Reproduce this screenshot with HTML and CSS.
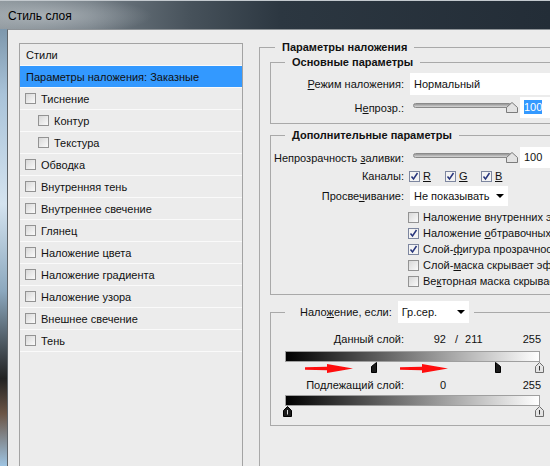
FILE: index.html
```html
<!DOCTYPE html>
<html lang="ru">
<head>
  <meta charset="UTF-8">
  <title>Стиль слоя</title>
  <link rel="stylesheet" href="styles.css">
</head>
<body>
<div class="window">
  <div class="titlebar">Стиль слоя</div>
  <div class="frame">
    <div class="glass"></div>
    <div class="client">

      <!-- список стилей слева -->
      <div class="styles-list">
        <div class="list-head">Стили</div>
        <div class="list-row selected">Параметры наложения: Заказные</div>
        <div class="list-row"><span class="cb"></span>Тиснение</div>
        <div class="list-row sub"><span class="cb"></span>Контур</div>
        <div class="list-row sub"><span class="cb"></span>Текстура</div>
        <div class="list-row"><span class="cb"></span>Обводка</div>
        <div class="list-row"><span class="cb"></span>Внутренняя тень</div>
        <div class="list-row"><span class="cb"></span>Внутреннее свечение</div>
        <div class="list-row"><span class="cb"></span>Глянец</div>
        <div class="list-row"><span class="cb"></span>Наложение цвета</div>
        <div class="list-row"><span class="cb"></span>Наложение градиента</div>
        <div class="list-row"><span class="cb"></span>Наложение узора</div>
        <div class="list-row"><span class="cb"></span>Внешнее свечение</div>
        <div class="list-row"><span class="cb"></span>Тень</div>
      </div>

      <!-- параметры справа -->
      <div class="settings">
        <fieldset class="group outer">
          <legend>Параметры наложения</legend>

          <fieldset class="group basic">
            <legend>Основные параметры</legend>
            <div class="row">
              <span class="lbl"><u>Р</u>ежим наложения:</span>
              <div class="select wide">Нормальный</div>
            </div>
            <div class="row opacity">
              <span class="lbl">Н<u>е</u>прозр.:</span>
              <div class="slider">
                <div class="track"></div>
                <svg class="slider-thumb" width="12" height="11" viewBox="0 0 12 11"><path d="M.5 10.5V5.5L6 .5l5.5 5v5z" fill="#e2e2e2" stroke="#7b7b7b"/></svg>
              </div>
              <div class="num"><span class="hl">100</span></div>
            </div>
          </fieldset>

          <fieldset class="group extra">
            <legend>Дополнительные параметры</legend>
            <div class="row opacity">
              <span class="lbl">Непрозрачность <u>з</u>аливки:</span>
              <div class="slider">
                <div class="track"></div>
                <svg class="slider-thumb" width="12" height="11" viewBox="0 0 12 11"><path d="M.5 10.5V5.5L6 .5l5.5 5v5z" fill="#e2e2e2" stroke="#7b7b7b"/></svg>
              </div>
              <div class="num">100</div>
            </div>
            <div class="row channels">
              <span class="lbl">Каналы:</span>
              <span class="chan">
                <svg class="box" width="11" height="11" viewBox="0 0 11 11"><rect x=".5" y=".5" width="10" height="10" fill="#f3f3f3" stroke="#7d869f"/><path d="M2.5 5.5l2 2.5 4-6" fill="none" stroke="#27357c" stroke-width="1.5"/></svg>
                <u>R</u>
              </span>
              <span class="chan">
                <svg class="box" width="11" height="11" viewBox="0 0 11 11"><rect x=".5" y=".5" width="10" height="10" fill="#f3f3f3" stroke="#7d869f"/><path d="M2.5 5.5l2 2.5 4-6" fill="none" stroke="#27357c" stroke-width="1.5"/></svg>
                <u>G</u>
              </span>
              <span class="chan">
                <svg class="box" width="11" height="11" viewBox="0 0 11 11"><rect x=".5" y=".5" width="10" height="10" fill="#f3f3f3" stroke="#7d869f"/><path d="M2.5 5.5l2 2.5 4-6" fill="none" stroke="#27357c" stroke-width="1.5"/></svg>
                <u>B</u>
              </span>
            </div>
            <div class="row knockout">
              <span class="lbl">Просве<u>ч</u>ивание:</span>
              <div class="select short">Не показывать</div>
            </div>
            <div class="checks">
              <div class="check-row">
                <span class="cb"></span>
                <span>Наложение внутренних эффектов как группы</span>
              </div>
              <div class="check-row">
                <svg class="box" width="11" height="11" viewBox="0 0 11 11"><rect x=".5" y=".5" width="10" height="10" fill="#f3f3f3" stroke="#7d869f"/><path d="M2.5 5.5l2 2.5 4-6" fill="none" stroke="#27357c" stroke-width="1.5"/></svg>
                <span>Наложение <u>о</u>бтравочных слоев как группы</span>
              </div>
              <div class="check-row">
                <svg class="box" width="11" height="11" viewBox="0 0 11 11"><rect x=".5" y=".5" width="10" height="10" fill="#f3f3f3" stroke="#7d869f"/><path d="M2.5 5.5l2 2.5 4-6" fill="none" stroke="#27357c" stroke-width="1.5"/></svg>
                <span>Слой-<u>ф</u>игура прозрачности</span>
              </div>
              <div class="check-row">
                <span class="cb"></span>
                <span>Слой-<u>м</u>аска скрывает эффекты</span>
              </div>
              <div class="check-row">
                <span class="cb"></span>
                <span>Ве<u>к</u>торная маска скрывает эффекты</span>
              </div>
            </div>
          </fieldset>

          <fieldset class="group blend">
            <legend>Нало<u>ж</u>ение, если:<span class="select gray">Гр.сер.</span></legend>
            <div class="level">
              <span class="lbl">Данный слой:</span>
              <span class="v1">92</span><span class="slash">/</span><span class="v2">211</span>
              <span class="vmax">255</span>
            </div>
            <div class="gradient-bar"></div>
            <div class="thumbs">
              <svg class="arrow" style="left:20px" width="48" height="9" viewBox="0 0 48 9"><path d="M0 3.3L22 2.7V0l26 4.5L22 9V6.3L0 5.7z" fill="#ff0d0d"/></svg>
              <svg class="arrow" style="left:115px" width="48" height="9" viewBox="0 0 48 9"><path d="M0 3.3L22 2.7V0l26 4.5L22 9V6.3L0 5.7z" fill="#ff0d0d"/></svg>
              <svg class="thumb" style="left:86px" width="6" height="11" viewBox="0 0 6 11"><path d="M.5 10.5V4.5L5.5.5v10z" fill="#1b1b1b" stroke="#000"/></svg>
              <svg class="thumb" style="left:210px" width="6" height="11" viewBox="0 0 6 11"><path d="M.5 .5l5 4v6h-5z" fill="#1b1b1b" stroke="#000"/></svg>
              <svg class="thumb" style="left:250px" width="9" height="11" viewBox="0 0 9 11"><path d="M.5 10.5v-6l4-4 4 4v6z" fill="#e4e4e4" stroke="#6e6e6e"/><path d="M4.5 4v4.5" stroke="#333"/></svg>
            </div>
            <div class="level under">
              <span class="lbl">Подлежащий слой:</span>
              <span class="v1">0</span>
              <span class="vmax">255</span>
            </div>
            <div class="gradient-bar second"></div>
            <div class="thumbs">
              <svg class="thumb" style="left:-2px" width="9" height="11" viewBox="0 0 9 11"><path d="M.5 10.5v-6l4-4 4 4v6z" fill="#1b1b1b" stroke="#000"/><path d="M4.5 4v4.5" stroke="#ddd"/></svg>
              <svg class="thumb" style="left:250px" width="9" height="11" viewBox="0 0 9 11"><path d="M.5 10.5v-6l4-4 4 4v6z" fill="#e4e4e4" stroke="#6e6e6e"/><path d="M4.5 4v4.5" stroke="#333"/></svg>
            </div>
          </fieldset>

        </fieldset>
      </div>
    </div>
  </div>
</div>
</body>
</html>
```

FILE: styles.css
```css
body {
  margin: 0;
  font-family: "Liberation Sans", Arial, sans-serif;
  font-size: 11px;
  color: #111;
  background: #ececec;
}

.window {
  width: 550px;
  height: 466px;
  overflow: hidden;
  display: flex;
  flex-direction: column;
}

/* Заголовок окна (Aero) */
.titlebar {
  flex: none;
  height: 28px;
  border-top: 1px solid #c3c9ce;
  padding-left: 8px;
  line-height: 30px;
  font-size: 12px;
  color: #000;
  background:
    radial-gradient(ellipse 110px 20px at 42px 15px, rgba(178, 185, 190, 0.8), rgba(178, 185, 190, 0)),
    linear-gradient(to right, #8b949a 0, #747e86 90px, #47525b 190px, #2c3741 280px, #232d37 100%);
}

.frame {
  flex: 1;
  display: flex;
  min-height: 0;
}

.glass {
  flex: none;
  width: 7px;
  background: linear-gradient(#7d97ac 0, #a9c3d9 15%, #d4e3ef 40%, #8ca8be 60%, #222 80%, #6b5546 88%, #9ec4e2 100%);
}

.client {
  flex: 1;
  display: flex;
  align-items: flex-start;
  gap: 16px;
  padding: 10px 0 0 11px;
  border-top: 1px solid #8e9397;
  border-left: 1px solid #5e6469;
  background: #ececec;
  overflow: hidden;
}

/* Список стилей */
.styles-list {
  flex: none;
  width: 222px;
  height: 440px;
  margin-top: 3px;
  border: 1px solid #a3a3a3;
}

.list-head,
.list-row {
  height: 21px;
  border-bottom: 1px solid #fafafa;
  display: flex;
  align-items: center;
  gap: 5px;
  padding-left: 5px;
  white-space: nowrap;
}

.list-head {
  padding-left: 6px;
}

.list-row.selected {
  background: #3399ff;
  padding-left: 6px;
}

.list-row.sub {
  padding-left: 18px;
}

.cb {
  flex: none;
  width: 9px;
  height: 9px;
  border: 1px solid #939393;
  background: linear-gradient(135deg, #d8d8d8, #fafafa);
}

.box {
  flex: none;
}

/* Группы параметров */
.settings {
  flex: none;
  width: 320px;
}

.group {
  margin: 0;
  padding: 0;
  border: 1px solid #a9a9a9;
  min-width: 0;
}

.group > legend {
  margin-left: 14px;
  padding: 0 7px;
  line-height: 14px;
  font-weight: bold;
}

.outer {
  padding-left: 10px;
  height: 440px;
}

.outer > legend {
  margin-left: 5px;
}

.basic {
  margin-top: 1px;
  padding: 4px 0 5px;
}

.extra {
  margin-top: 4px;
  padding: 5px 0 5px;
}

.blend {
  margin-top: 6px;
  padding: 9px 0 7px;
}

.row {
  display: flex;
  align-items: center;
  white-space: nowrap;
}

.lbl {
  flex: none;
  width: 133px;
  margin-right: 5px;
  text-align: right;
}

.row.opacity {
  margin-top: 2px;
  height: 21px;
}

.extra .row.opacity {
  margin-top: 0;
}

.select {
  position: relative;
  box-sizing: border-box;
  height: 22px;
  line-height: 22px;
  margin-left: 1px;
  padding-left: 4px;
  background: #fff;
  font-weight: normal;
}

.select.wide {
  width: 170px;
}

.select.short {
  width: 98px;
  height: 20px;
  line-height: 20px;
}

.select.short::after,
.select.gray::after {
  content: "";
  position: absolute;
  right: 4px;
  top: 50%;
  margin-top: -2px;
  border-left: 4px solid transparent;
  border-right: 4px solid transparent;
  border-top: 4px solid #000;
}

.slider {
  position: relative;
  flex: none;
  width: 105px;
  height: 12px;
  margin-left: 4px;
}

.track {
  width: 97px;
  height: 3px;
  margin-top: 1px;
  border: 1px solid #8a8a8a;
  border-radius: 3px;
  background: linear-gradient(#979797, #d6d6d6);
}

.slider-thumb {
  position: absolute;
  right: 0;
  top: 0;
}

.num {
  flex: none;
  width: 40px;
  height: 21px;
  line-height: 21px;
  margin-left: 2px;
  padding-left: 4px;
  background: #fff;
}

.hl {
  background: #3399ff;
  color: #fff;
  padding: 1px 0;
}

.channels {
  margin-top: 1px;
  height: 14px;
}

.chan {
  flex: none;
  width: 36px;
  display: flex;
  align-items: center;
  gap: 3px;
}

.knockout {
  margin-top: 3px;
}

.checks {
  margin: 3px 0 0 137px;
}

.check-row {
  height: 16px;
  display: flex;
  align-items: center;
  gap: 4px;
  white-space: nowrap;
}

/* Наложение, если */
.blend > legend {
  font-weight: normal;
  margin-left: 14px;
  padding: 0 5px 0 15px;
  line-height: 22px;
}

.select.gray {
  display: inline-block;
  vertical-align: top;
  width: 71px;
  margin-left: 6px;
}

.level {
  display: flex;
  width: 270px;
  height: 14px;
  line-height: 14px;
  white-space: nowrap;
}

.v1 {
  width: 37px;
  text-align: right;
}

.slash {
  margin-left: 9px;
}

.v2 {
  margin-left: 7px;
}

.vmax {
  margin-left: auto;
}

.level.under {
  margin-top: 4px;
}

.gradient-bar {
  width: 253px;
  height: 9px;
  margin: 5px 0 0 14px;
  border: 1px solid #9f9f9f;
  background: linear-gradient(to right, #000, #fff);
}

.gradient-bar.second {
  margin-top: 3px;
}

.thumbs {
  position: relative;
  width: 255px;
  height: 12px;
  margin-left: 14px;
}

.thumbs svg {
  position: absolute;
  top: 0;
}

.thumbs .arrow {
  top: 2px;
}
```
